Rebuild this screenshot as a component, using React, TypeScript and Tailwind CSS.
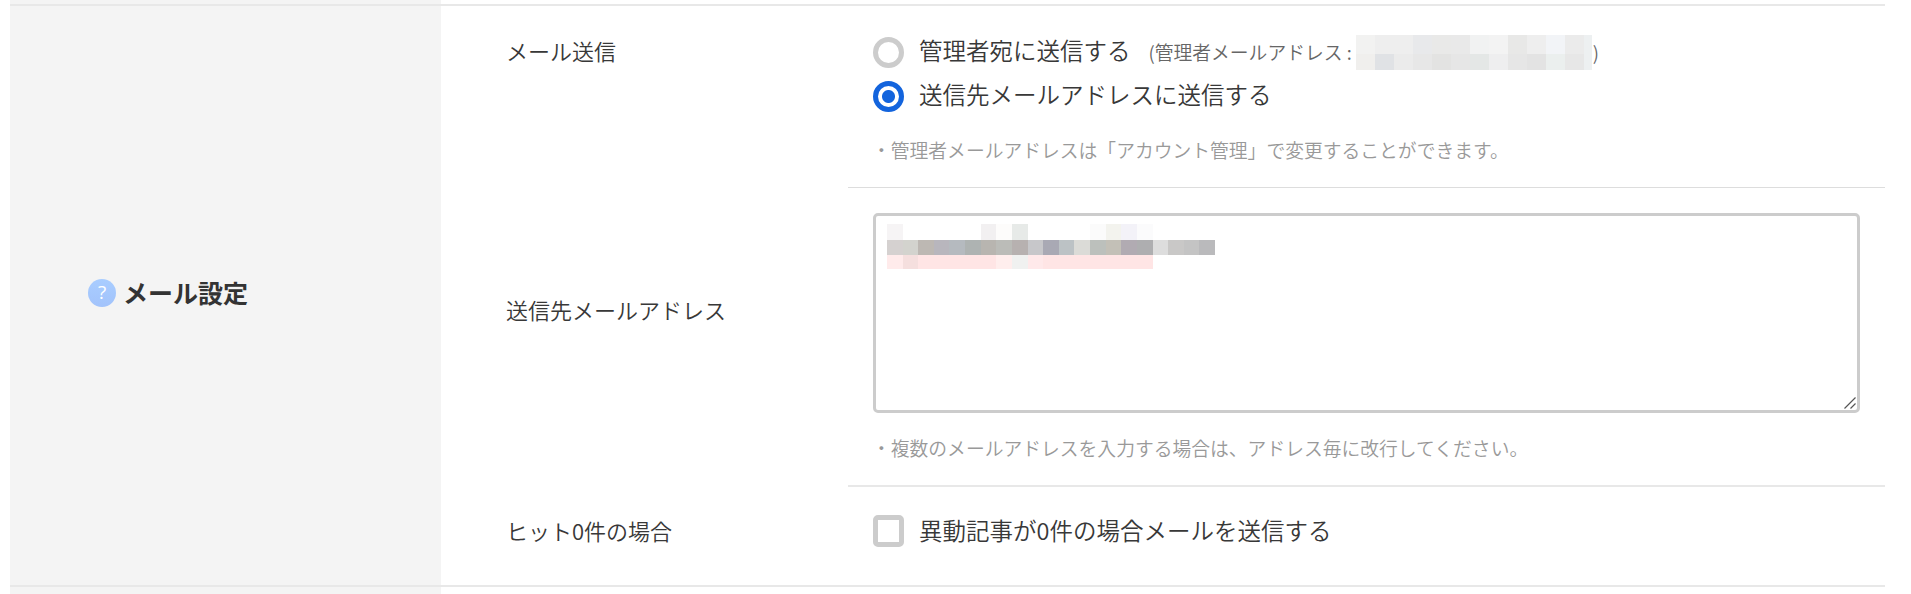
import type { ReactNode } from "react";

const ADMIN_MOSAIC = [
  ["#f2f2f1", "#eeeeee", "#eeeeee", "#e8e9eb", "#e9e9e8", "#e9e9e9", "#f1f2f2", "#f3f3f3", "#e8e8e7", "#eeeeee", "#f2f4f7", "#ebebeb", "#edf0f1"],
  ["#f0efed", "#e0e2e5", "#ebebeb", "#e7e7e7", "#e3e3e2", "#e6e6e6", "#e4e7e6", "#eeeeef", "#e6e6e6", "#e3e3e3", "#ebefee", "#e7e7e7", "#edf0f1"],
];

const ADDRESS_MOSAIC = [
  ["#f6f4f5", "", "", "", "", "", "#f2f0f1", "#fdfcfb", "#e7eae8", "", "", "", "", "#fbfbfb", "#f3f3ee", "#f3f2f8", "#fbfbfc", "", "", "", ""],
  ["#d5d1d0", "#d3d3ce", "#bdb8b3", "#b8b6bd", "#b5babf", "#aeb3b2", "#b8b5b0", "#bbbcb8", "#b7b1b0", "#c7c7ca", "#a9a9b4", "#bcc2c5", "#dbdbd7", "#bcc0bc", "#c3c0b7", "#b1abb2", "#aeaeb0", "#dddddd", "#c9c8c7", "#c4c4c4", "#bababc"],
  ["#ffebeb", "#f5dfde", "#ffe5e5", "#ffe5e5", "#ffe5e5", "#ffe5e5", "#ffe5e5", "#ffeeed", "#f0f1f0", "#ffe9ea", "#ffe5e5", "#ffe5e5", "#ffe5e5", "#ffe5e5", "#ffe5e5", "#ffe5e5", "#ffe5e5", "", "", "", ""],
];

type MosaicProps = {
  rows: string[][];
  className: string;
};

function Mosaic({ rows, className }: MosaicProps) {
  return (
    <div aria-hidden="true" className={`grid ${className}`}>
      {rows.flat().map((color, index) => (
        <span key={index} style={{ backgroundColor: color || "transparent" }} />
      ))}
    </div>
  );
}

type SettingRowProps = {
  label: string;
  labelClassName: string;
  className: string;
  children: ReactNode;
};

function SettingRow({ label, labelClassName, className, children }: SettingRowProps) {
  return (
    <div className={`flex ${className}`}>
      <div className={`flex w-[407px] shrink-0 pl-[65px] text-[22px] leading-8 ${labelClassName}`}>
        {label}
      </div>
      {children}
    </div>
  );
}

function Note({ className, children }: { className: string; children: ReactNode }) {
  return <p className={`-ml-px text-[18.8px] leading-7 text-[#999] ${className}`}>{children}</p>;
}

export default function App() {
  return (
    <div className="flex h-[594px] flex-col overflow-hidden bg-white pr-[26px] pl-[10px] font-['Noto_Sans_CJK_JP',sans-serif] font-[350] text-[#383838]">
      <div className="h-1 w-[431px] bg-[#f4f4f4]" />
      <div className="flex h-[583px] border-y-2 border-[#e8e8e8]">
        <div className="flex w-[431px] shrink-0 items-center bg-[#f4f4f4] pb-[6px] pl-[78px]">
          <span className="flex size-7 items-center justify-center rounded-full bg-linear-to-b from-[#a9cdff] to-[#a2c3fb] font-['Open_Sans',sans-serif] text-[19px] font-normal text-white">
            ?
          </span>
          <h2 className="ml-[7px] pb-[2px] text-[25px] leading-9 font-bold text-[#333]">メール設定</h2>
        </div>

        <div className="flex-1">
          <SettingRow label="メール送信" labelClassName="pt-[28px]" className="h-[182px]">
            <div className="flex-1 border-b border-[#ddd] pt-[24px] pl-[25px]">
              <div className="flex h-11 items-center">
                <input type="radio" name="target" className="size-[31px] appearance-none rounded-full border-[5px] border-[#ccc] bg-white" />
                <span className="ml-[15px] pb-[2px] text-[23.5px]">管理者宛に送信する</span>
                <span className="ml-[18px] text-[18.8px] text-[#666]">
                  <span className="inline-block">(</span>管理者メールアドレス :
                </span>
                <Mosaic rows={ADMIN_MOSAIC} className="ml-1 h-[35px] w-[236px] grid-cols-[repeat(12,19px)_8px] grid-rows-[19px_16px]" />
                <span className="ml-px text-[18.8px] text-[#666]">)</span>
              </div>
              <div className="flex h-11 items-center">
                <input
                  type="radio"
                  name="target"
                  defaultChecked
                  className="size-[31px] appearance-none rounded-full border-[5px] border-[#1364dd] bg-[radial-gradient(circle,#1364dd_6px,#fff_7px)]"
                />
                <span className="ml-[15px] pb-[2px] text-[23.5px]">送信先メールアドレスに送信する</span>
              </div>
              <Note className="mt-[18px]">・管理者メールアドレスは「アカウント管理」で変更することができます。</Note>
            </div>
          </SettingRow>

          <SettingRow label="送信先メールアドレス" labelClassName="pt-[105px]" className="h-[299px]">
            <div className="flex-1 border-b-2 border-[#e8e8e8] pt-[25px] pr-[25px] pl-[25px]">
              <div className="relative h-[200px]">
                <textarea className="block h-full w-full resize-none rounded-[5px] border-[3px] border-[#ccc] bg-white" />
                <Mosaic
                  rows={ADDRESS_MOSAIC}
                  className="absolute top-[11px] left-[14px] h-[45px] w-[328px] grid-cols-[repeat(21,minmax(0,1fr))] grid-rows-[16px_15px_14px]"
                />
                <svg className="absolute right-[4px] bottom-[4px] size-3" viewBox="0 0 12 12" stroke="#555" strokeWidth="1.2">
                  <path d="M0.5 11.5 11.5 0.5M6.5 11.5 11.5 6.5" />
                </svg>
              </div>
              <Note className="mt-[21px]">・複数のメールアドレスを入力する場合は、アドレス毎に改行してください。</Note>
            </div>
          </SettingRow>

          <SettingRow label="ヒット0件の場合" labelClassName="pt-[27px]" className="h-[98px]">
            <div className="flex-1 pt-[22px] pl-[25px]">
              <div className="flex h-11 items-center">
                <input type="checkbox" className="h-8 w-[31px] appearance-none rounded-[5px] border-[5px] border-[#ccc] bg-white" />
                <span className="ml-[15px] text-[23.5px]">異動記事が0件の場合メールを送信する</span>
              </div>
            </div>
          </SettingRow>
        </div>
      </div>
      <div className="h-[7px] w-[431px] bg-[#f4f4f4]" />
    </div>
  );
}
